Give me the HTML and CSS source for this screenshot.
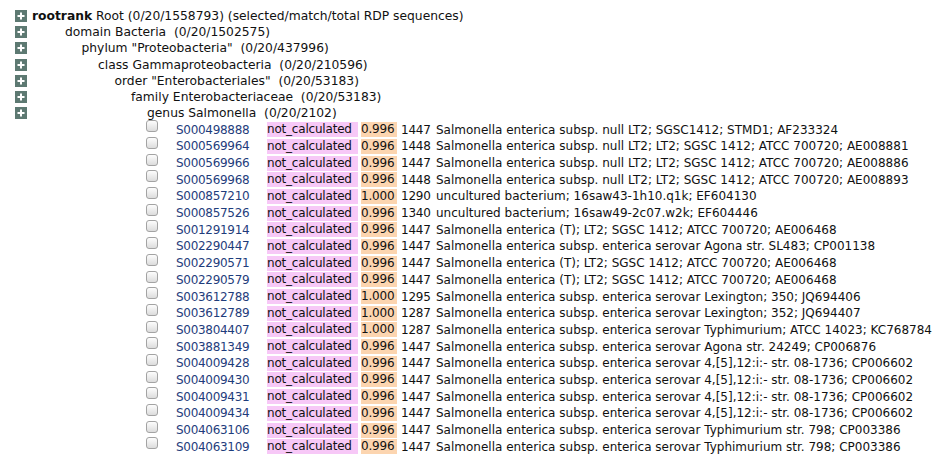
FILE: index.html
```html
<!DOCTYPE html>
<html>
<head>
<meta charset="utf-8">
<link rel="stylesheet" href="styles.css">
</head>
<body>
<div class="hier">
  <div class="trow"><span class="exp"><svg width="12" height="12" viewBox="0 0 12 12"><rect width="12" height="12" fill="#5d7972"/><path d="M6 2.5v7M2.5 6h7" stroke="#fff" stroke-width="2"/></svg></span><span class="tx lv0"><b>rootrank</b> Root (0/20/1558793) (selected/match/total RDP sequences)</span></div>
  <div class="trow"><span class="exp"><svg width="12" height="12" viewBox="0 0 12 12"><rect width="12" height="12" fill="#5d7972"/><path d="M6 2.5v7M2.5 6h7" stroke="#fff" stroke-width="2"/></svg></span><span class="tx lv1">domain Bacteria&nbsp; (0/20/1502575)</span></div>
  <div class="trow"><span class="exp"><svg width="12" height="12" viewBox="0 0 12 12"><rect width="12" height="12" fill="#5d7972"/><path d="M6 2.5v7M2.5 6h7" stroke="#fff" stroke-width="2"/></svg></span><span class="tx lv2">phylum "Proteobacteria"&nbsp; (0/20/437996)</span></div>
  <div class="trow"><span class="exp"><svg width="12" height="12" viewBox="0 0 12 12"><rect width="12" height="12" fill="#5d7972"/><path d="M6 2.5v7M2.5 6h7" stroke="#fff" stroke-width="2"/></svg></span><span class="tx lv3">class Gammaproteobacteria&nbsp; (0/20/210596)</span></div>
  <div class="trow"><span class="exp"><svg width="12" height="12" viewBox="0 0 12 12"><rect width="12" height="12" fill="#5d7972"/><path d="M6 2.5v7M2.5 6h7" stroke="#fff" stroke-width="2"/></svg></span><span class="tx lv4">order "Enterobacteriales"&nbsp; (0/20/53183)</span></div>
  <div class="trow"><span class="exp"><svg width="12" height="12" viewBox="0 0 12 12"><rect width="12" height="12" fill="#5d7972"/><path d="M6 2.5v7M2.5 6h7" stroke="#fff" stroke-width="2"/></svg></span><span class="tx lv5">family Enterobacteriaceae&nbsp; (0/20/53183)</span></div>
  <div class="trow"><span class="exp"><svg width="12" height="12" viewBox="0 0 12 12"><rect width="12" height="12" fill="#5d7972"/><path d="M6 2.5v7M2.5 6h7" stroke="#fff" stroke-width="2"/></svg></span><span class="tx lv6">genus Salmonella&nbsp; (0/20/2102)</span></div>
</div>
<div class="seqs">
  <div class="srow"><span class="cb"></span><a class="sid" href="#">S000498888</a><span class="s1">not_calculated</span><span class="s2">0.996</span><span class="len">1447</span><span class="desc">Salmonella enterica subsp. null LT2; SGSC1412; STMD1; AF233324</span></div>
  <div class="srow"><span class="cb"></span><a class="sid" href="#">S000569964</a><span class="s1">not_calculated</span><span class="s2">0.996</span><span class="len">1448</span><span class="desc">Salmonella enterica subsp. null LT2; LT2; SGSC 1412; ATCC 700720; AE008881</span></div>
  <div class="srow"><span class="cb"></span><a class="sid" href="#">S000569966</a><span class="s1">not_calculated</span><span class="s2">0.996</span><span class="len">1447</span><span class="desc">Salmonella enterica subsp. null LT2; LT2; SGSC 1412; ATCC 700720; AE008886</span></div>
  <div class="srow"><span class="cb"></span><a class="sid" href="#">S000569968</a><span class="s1">not_calculated</span><span class="s2">0.996</span><span class="len">1448</span><span class="desc">Salmonella enterica subsp. null LT2; LT2; SGSC 1412; ATCC 700720; AE008893</span></div>
  <div class="srow"><span class="cb"></span><a class="sid" href="#">S000857210</a><span class="s1">not_calculated</span><span class="s2">1.000</span><span class="len">1290</span><span class="desc">uncultured bacterium; 16saw43-1h10.q1k; EF604130</span></div>
  <div class="srow"><span class="cb"></span><a class="sid" href="#">S000857526</a><span class="s1">not_calculated</span><span class="s2">0.996</span><span class="len">1340</span><span class="desc">uncultured bacterium; 16saw49-2c07.w2k; EF604446</span></div>
  <div class="srow"><span class="cb"></span><a class="sid" href="#">S001291914</a><span class="s1">not_calculated</span><span class="s2">0.996</span><span class="len">1447</span><span class="desc">Salmonella enterica (T); LT2; SGSC 1412; ATCC 700720; AE006468</span></div>
  <div class="srow"><span class="cb"></span><a class="sid" href="#">S002290447</a><span class="s1">not_calculated</span><span class="s2">0.996</span><span class="len">1447</span><span class="desc">Salmonella enterica subsp. enterica serovar Agona str. SL483; CP001138</span></div>
  <div class="srow"><span class="cb"></span><a class="sid" href="#">S002290571</a><span class="s1">not_calculated</span><span class="s2">0.996</span><span class="len">1447</span><span class="desc">Salmonella enterica (T); LT2; SGSC 1412; ATCC 700720; AE006468</span></div>
  <div class="srow"><span class="cb"></span><a class="sid" href="#">S002290579</a><span class="s1">not_calculated</span><span class="s2">0.996</span><span class="len">1447</span><span class="desc">Salmonella enterica (T); LT2; SGSC 1412; ATCC 700720; AE006468</span></div>
  <div class="srow"><span class="cb"></span><a class="sid" href="#">S003612788</a><span class="s1">not_calculated</span><span class="s2">1.000</span><span class="len">1295</span><span class="desc">Salmonella enterica subsp. enterica serovar Lexington; 350; JQ694406</span></div>
  <div class="srow"><span class="cb"></span><a class="sid" href="#">S003612789</a><span class="s1">not_calculated</span><span class="s2">1.000</span><span class="len">1287</span><span class="desc">Salmonella enterica subsp. enterica serovar Lexington; 352; JQ694407</span></div>
  <div class="srow"><span class="cb"></span><a class="sid" href="#">S003804407</a><span class="s1">not_calculated</span><span class="s2">1.000</span><span class="len">1287</span><span class="desc">Salmonella enterica subsp. enterica serovar Typhimurium; ATCC 14023; KC768784</span></div>
  <div class="srow"><span class="cb"></span><a class="sid" href="#">S003881349</a><span class="s1">not_calculated</span><span class="s2">0.996</span><span class="len">1447</span><span class="desc">Salmonella enterica subsp. enterica serovar Agona str. 24249; CP006876</span></div>
  <div class="srow"><span class="cb"></span><a class="sid" href="#">S004009428</a><span class="s1">not_calculated</span><span class="s2">0.996</span><span class="len">1447</span><span class="desc">Salmonella enterica subsp. enterica serovar 4,[5],12:i:- str. 08-1736; CP006602</span></div>
  <div class="srow"><span class="cb"></span><a class="sid" href="#">S004009430</a><span class="s1">not_calculated</span><span class="s2">0.996</span><span class="len">1447</span><span class="desc">Salmonella enterica subsp. enterica serovar 4,[5],12:i:- str. 08-1736; CP006602</span></div>
  <div class="srow"><span class="cb"></span><a class="sid" href="#">S004009431</a><span class="s1">not_calculated</span><span class="s2">0.996</span><span class="len">1447</span><span class="desc">Salmonella enterica subsp. enterica serovar 4,[5],12:i:- str. 08-1736; CP006602</span></div>
  <div class="srow"><span class="cb"></span><a class="sid" href="#">S004009434</a><span class="s1">not_calculated</span><span class="s2">0.996</span><span class="len">1447</span><span class="desc">Salmonella enterica subsp. enterica serovar 4,[5],12:i:- str. 08-1736; CP006602</span></div>
  <div class="srow"><span class="cb"></span><a class="sid" href="#">S004063106</a><span class="s1">not_calculated</span><span class="s2">0.996</span><span class="len">1447</span><span class="desc">Salmonella enterica subsp. enterica serovar Typhimurium str. 798; CP003386</span></div>
  <div class="srow"><span class="cb"></span><a class="sid" href="#">S004063109</a><span class="s1">not_calculated</span><span class="s2">0.996</span><span class="len">1447</span><span class="desc">Salmonella enterica subsp. enterica serovar Typhimurium str. 798; CP003386</span></div>
</div>
</body>
</html>
```
FILE: styles.css
```css
html, body {
  margin: 0;
  padding: 0;
  background: #fff;
}
body {
  padding: 8px 0 0 0;
  font-family: "DejaVu Sans", Verdana, sans-serif;
  font-size: 12px;
  color: #111;
  white-space: nowrap;
  overflow: hidden;
}
.hier {
  display: flex;
  flex-direction: column;
}
.trow {
  display: flex;
  align-items: center;
  height: 16.2px;
  line-height: 16.2px;
}
.tx {
  font-size: 12.3px;
}
.exp {
  display: flex;
  width: 12px;
  height: 12px;
  margin-left: 15px;
  margin-right: 5px;
  flex: none;
}
.exp svg { display: block; }
.lv1 { padding-left: 33px; }
.lv2 { padding-left: 49.5px; }
.lv3 { padding-left: 66px; }
.lv4 { padding-left: 82.5px; }
.lv5 { padding-left: 99px; }
.lv6 { padding-left: 115px; }
.tx b { font-weight: bold; }

.seqs {
  display: flex;
  flex-direction: column;
}
.srow {
  display: flex;
  align-items: center;
  height: 16.7px;
}
.cb {
  flex: none;
  box-sizing: border-box;
  width: 12px;
  height: 12px;
  margin-left: 146px;
  align-self: flex-start;
  margin-top: -1px;
  border: 1px solid #a3a3a3;
  border-radius: 3px;
  background: linear-gradient(#fdfdfd, #dcdcdc);
}
.sid {
  flex: none;
  width: 91px;
  margin-left: 18px;
  color: #1f3d7c;
  text-decoration: none;
  letter-spacing: -0.3px;
}
.s1, .s2 {
  flex: none;
  line-height: 15px;
  height: 15px;
  letter-spacing: -0.2px;
}
.s1 {
  width: 91px;
  background: #f7c8f7;
}
.s2 {
  width: 36px;
  margin-left: 3px;
  background: #fcd5b0;
}
.len {
  flex: none;
  width: 35px;
  margin-left: 4px;
  letter-spacing: -0.2px;
}
.desc {
  flex: none;
}
```
